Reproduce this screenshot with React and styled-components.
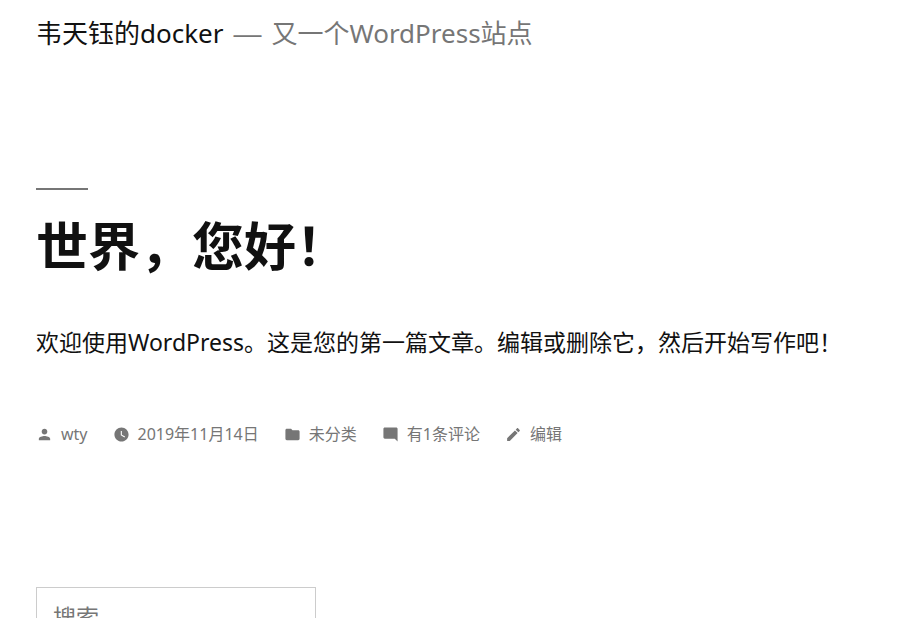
import React from "react";
import styled, { createGlobalStyle } from "styled-components";

const GlobalStyle = createGlobalStyle`
  * { box-sizing: border-box; }
  body {
    margin: 0;
    background: #fff;
    color: #111;
    font-family: "Noto Sans", "Noto Sans CJK SC", sans-serif;
    overflow-x: hidden;
  }
`;

const Page = styled.div`
  padding: 15px 36px 0;
  height: 100vh;
  overflow: hidden;
`;

const Branding = styled.header`
  display: flex;
  flex-wrap: wrap;
  align-items: baseline;
  gap: 10px;
  font-size: 26px;
  line-height: 36px;
`;

const SiteTitle = styled.a`
  color: #111;
  text-decoration: none;
`;

const Dash = styled.span`
  color: #767676;
  font-family: "Liberation Sans", sans-serif;
  font-size: 28px;
`;

const Tagline = styled.p`
  margin: 0;
  color: #767676;
`;

const Article = styled.article`
  margin-top: 136px;
`;

const EntryTitle = styled.h1`
  margin: 0;
  font-size: 52px;
  line-height: 60px;
  font-weight: 700;
  &::before {
    content: "";
    display: block;
    width: 52px;
    height: 2px;
    margin-bottom: 26px;
    background: #767676;
  }
`;

const Content = styled.p`
  margin: 46px 0 0;
  font-size: 23px;
  line-height: 40px;
`;

const Meta = styled.footer`
  display: flex;
  flex-wrap: wrap;
  gap: 25px;
  margin-top: 60px;
  font-size: 16px;
  line-height: 24px;
`;

const MetaLink = styled.a`
  display: inline-flex;
  align-items: center;
  gap: 8px;
  color: #767676;
  text-decoration: none;
`;

const Icon = styled.svg`
  width: 17px;
  height: 17px;
  fill: currentColor;
`;

const SearchForm = styled.form`
  margin-top: 141px;
`;

const SearchInput = styled.input`
  display: block;
  width: 280px;
  height: 60px;
  padding: 0 16px;
  border: 1px solid #ccc;
  border-radius: 0;
  font: inherit;
  font-size: 23px;
  &::placeholder { color: #767676; opacity: 1; }
`;

const items = [
  { label: "wty", path: "M12 12c2.21 0 4-1.79 4-4s-1.79-4-4-4-4 1.79-4 4 1.79 4 4 4zm0 2c-2.67 0-8 1.34-8 4v2h16v-2c0-2.66-5.33-4-8-4z" },
  { label: "2019年11月14日", path: "M12 2C6.5 2 2 6.5 2 12s4.5 10 10 10 10-4.5 10-10S17.5 2 12 2zm4.2 14.2L11 13V7h1.5v5.2l4.5 2.7-.8 1.3z" },
  { label: "未分类", path: "M10 4H4c-1.1 0-2 .9-2 2v12c0 1.1.9 2 2 2h16c1.1 0 2-.9 2-2V8c0-1.1-.9-2-2-2h-8l-2-2z" },
  { label: "有1条评论", path: "M21.99 4c0-1.1-.89-2-1.99-2H4c-1.1 0-2 .9-2 2v12c0 1.1.9 2 2 2h14l4 4-.01-18z" },
  { label: "编辑", path: "M3 17.25V21h3.75L17.81 9.94l-3.75-3.75L3 17.25zM20.71 7.04c.39-.39.39-1.02 0-1.41l-2.34-2.34c-.39-.39-1.02-.39-1.41 0l-1.83 1.83 3.75 3.75 1.83-1.83z" },
];

export default function App() {
  return (
    <Page lang="zh-CN">
      <GlobalStyle />
      <Branding>
        <SiteTitle href="#">韦天钰的docker</SiteTitle>
        <Dash>—</Dash>
        <Tagline>又一个WordPress站点</Tagline>
      </Branding>
      <Article>
        <EntryTitle>世界，您好！</EntryTitle>
        <Content>欢迎使用WordPress。这是您的第一篇文章。编辑或删除它，然后开始写作吧！</Content>
        <Meta>
          {items.map((item) => (
            <MetaLink href="#" key={item.label}>
              <Icon viewBox="0 0 24 24" aria-hidden="true"><path d={item.path} /></Icon>
              {item.label}
            </MetaLink>
          ))}
        </Meta>
      </Article>
      <SearchForm role="search">
        <SearchInput type="search" placeholder="搜索" aria-label="搜索" />
      </SearchForm>
    </Page>
  );
}
